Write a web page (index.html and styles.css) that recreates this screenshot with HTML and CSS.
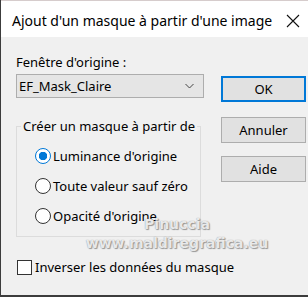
FILE: index.html
```html
<!DOCTYPE html>
<html lang="fr">
<head>
  <meta charset="UTF-8" />
  <title>Ajout d'un masque à partir d'une image</title>
  <link rel="stylesheet" href="styles.css">
</head>
<body>
  <div class="dialog">
    <div class="titlebar">
      <span class="title">Ajout d'un masque à partir d'une image</span>
      <svg class="close" width="14" height="14" viewBox="0 0 14 14">
        <path d="M1 1 L13 13 M13 1 L1 13" stroke="#111" stroke-width="1.1" fill="none"/>
      </svg>
    </div>

    <div class="content">
      <div class="left-col">
        <label class="field-label">Fenêtre d'origine :</label>
        <div class="select">
          <span>EF_Mask_Claire</span>
          <svg width="9" height="6" viewBox="0 0 9 6">
            <path d="M0.5 1 L4.5 5 L8.5 1" stroke="#444" stroke-width="1" fill="none"/>
          </svg>
        </div>

        <fieldset class="group">
          <legend>Créer un masque à partir de</legend>
          <label class="radio-row"><input type="radio" name="src" checked> Luminance d'origine</label>
          <label class="radio-row"><input type="radio" name="src"> Toute valeur sauf zéro</label>
          <label class="radio-row"><input type="radio" name="src"> Opacité d'origine</label>
        </fieldset>

        <label class="check-row"><input type="checkbox"> Inverser les données du masque</label>
      </div>

      <div class="right-col">
        <button class="btn btn-default">OK</button>
        <button class="btn btn-cancel">Annuler</button>
        <button class="btn">Aide</button>
      </div>
    </div>

    <!-- watermark over the dialog -->
    <div class="watermark">
      <div>Pinuccia</div>
      <div>www.maldiregrafica.eu</div>
    </div>
  </div>
</body>
</html>
```

FILE: styles.css
```css
body {
  margin: 0;
  padding: 0;
  background: #3c3c3c;
  font-family: 'Noto Sans', 'Open Sans', sans-serif;
  color: #000;
}

.dialog {
  position: relative;
  width: 307px;
  height: 295px;
  margin-left: 1px;
  background: #f0f0f0;
  overflow: hidden;
}

.titlebar {
  height: 37px;
  background: #fff;
  display: flex;
  align-items: center;
  justify-content: space-between;
  padding: 0 8px 0 11px;
  border-top: 1px solid #d6cccc;
  box-sizing: border-box;
}

.title {
  font-size: 14px;
  white-space: nowrap;
  color: #000;
  padding-top: 3px;
}

.close {
  margin-top: 3px;
}

.content {
  display: flex;
  padding: 16px 0 0 15px;
  font-size: 13px;
  white-space: nowrap;
}

.left-col {
  width: 188px;
  display: flex;
  flex-direction: column;
}

.field-label {
  line-height: 18px;
  margin-bottom: 3px;
}

.select {
  height: 24px;
  box-sizing: border-box;
  border: 1px solid #adadad;
  background: #e5e5e5;
  display: flex;
  align-items: center;
  justify-content: space-between;
  padding: 0 9px 0 2px;
}

.group {
  margin: 19px 3px 0 0;
  padding: 6px 0 5px 18px;
  border: 1px solid #dcdcdc;
  min-width: 0;
}

.group legend {
  padding: 0 2px;
  margin-left: -14px;
  line-height: 18px;
}

.radio-row {
  display: flex;
  align-items: center;
  gap: 2px;
  height: 30px;
}

.radio-row input {
  appearance: none;
  flex-shrink: 0;
  margin: 0;
  width: 16px;
  height: 16px;
  border: 1px solid #333;
  border-radius: 50%;
  background: #fff;
  box-sizing: border-box;
}

.radio-row input:checked {
  border-color: #0078d7;
  background: radial-gradient(circle, #0078d7 0 4px, #fff 4.5px);
}

.check-row {
  display: flex;
  align-items: center;
  gap: 3px;
  margin-top: 21px;
}

.check-row input {
  appearance: none;
  flex-shrink: 0;
  margin: 0 0 0 1px;
  width: 15px;
  height: 15px;
  border: 1px solid #333;
  background: #fff;
  box-sizing: border-box;
}

.right-col {
  display: flex;
  flex-direction: column;
  margin-left: 17px;
  padding-top: 23px;
}

.btn {
  width: 85px;
  height: 26px;
  background: #e1e1e1;
  border: 1px solid #adadad;
  font-family: inherit;
  font-size: 13px;
  color: #000;
  padding: 0;
}

.btn-default {
  border: 2px solid #0078d7;
}

.btn-cancel {
  margin: 15px 0 13px;
}

.watermark {
  position: absolute;
  left: 82px;
  top: 215px;
  width: 188px;
  text-align: center;
  font-family: 'DejaVu Sans', sans-serif;
  font-weight: bold;
  font-size: 14px;
  line-height: 19px;
  color: rgba(250, 250, 250, 0.85);
  text-shadow: 0 0 1px #888, 1px 1px 1px #999;
}
```
